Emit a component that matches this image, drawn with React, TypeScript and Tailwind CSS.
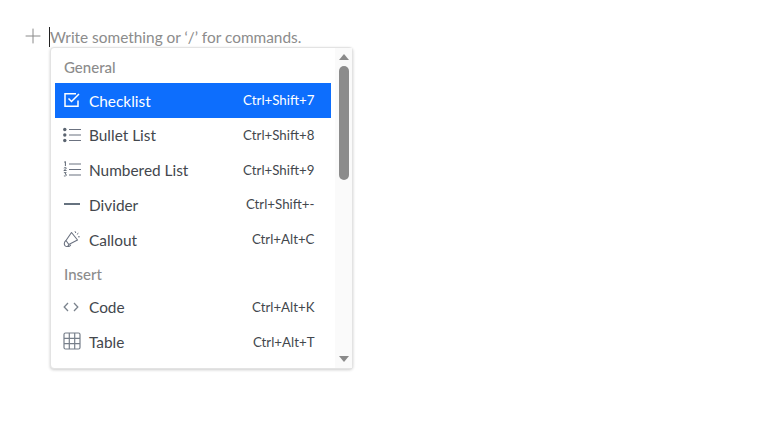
import React from "react";
import { Plus } from "lucide-react";

const CheckIcon = () => (
  <svg width="18" height="18" viewBox="0 0 18 18" fill="none" stroke="currentColor" strokeWidth="1.5">
    <path d="M15 9.5V15.2H2V2.8H13" />
    <path d="M5.5 7.5 8.5 10.5 16 3" />
  </svg>
);

const BulletIcon = () => (
  <svg width="18" height="16" viewBox="0 0 18 16" fill="none" stroke="currentColor" strokeWidth="1.2">
    <circle cx="1.8" cy="2.5" r="1.7" fill="#5b6470" stroke="none" />
    <circle cx="1.8" cy="8" r="1.7" fill="#5b6470" stroke="none" />
    <circle cx="1.8" cy="13.5" r="1.7" fill="#5b6470" stroke="none" />
    <path d="M6 2.5h12M6 8h12M6 13.5h12" />
  </svg>
);

const NumberedIcon = () => (
  <svg width="18" height="17" viewBox="0 0 18 17" fill="none" stroke="currentColor">
    <path d="M1.2 1.2 2.4.6V5" strokeWidth="0.9" stroke="#4b5563" />
    <path d="M.8 7.2q1.6-1.4 2.5-.3.4.7-2.5 2.6h2.8" strokeWidth="0.8" stroke="#4b5563" />
    <path d="M.9 11.6h2.3l-1.2 1.4q1.6 0 1.4 1.2-.5 1.4-2.5.7" strokeWidth="0.8" stroke="#4b5563" />
    <path d="M6 3h12M6 8.5h12M6 14h12" strokeWidth="1.1" />
  </svg>
);

const DividerIcon = () => (
  <svg width="18" height="16" viewBox="0 0 18 16" fill="none" stroke="#66727f" strokeWidth="2">
    <path d="M1 8h16" />
  </svg>
);

const CalloutIcon = () => (
  <svg width="18" height="18" viewBox="0 0 18 18" fill="none" stroke="currentColor" strokeWidth="1.1">
    <path d="M3 10.5 8.5 2.5 14.5 10 5.8 14.5Z" strokeLinejoin="round" />
    <path d="M3 10.5C1 12 .8 14.5 2.2 15.8 3.6 17 5.8 16.6 5.8 14.5" />
    <path d="M4.2 16.2c1.6.6 3 .1 3.6-1.6" />
    <path d="M12 1.2l.8 1.8M15.4 3.2l-1.5 1.2M16.8 6.8h-1.8" strokeWidth="1" />
  </svg>
);

const CodeIcon = () => (
  <svg width="16" height="12" viewBox="0 0 16 12" fill="none" stroke="#7b838d" strokeWidth="1.3">
    <path d="M5 2 1.2 6 5 10M11 2l3.8 4L11 10" />
  </svg>
);

const TableIcon = () => (
  <svg width="18" height="18" viewBox="0 0 18 18" fill="none" stroke="#777f8a" strokeWidth="1.2">
    <rect x="1" y="1" width="16" height="16" rx="1.5" />
    <path d="M1 6.3h16M1 11.7h16M6.3 1v16M11.7 1v16" />
  </svg>
);

const general = [
  { icon: <CheckIcon />, label: "Checklist", keys: "Ctrl+Shift+7", active: true },
  { icon: <BulletIcon />, label: "Bullet List", keys: "Ctrl+Shift+8" },
  { icon: <NumberedIcon />, label: "Numbered List", keys: "Ctrl+Shift+9" },
  { icon: <DividerIcon />, label: "Divider", keys: "Ctrl+Shift+-" },
  { icon: <CalloutIcon />, label: "Callout", keys: "Ctrl+Alt+C" },
];

const insert = [
  { icon: <CodeIcon />, label: "Code", keys: "Ctrl+Alt+K" },
  { icon: <TableIcon />, label: "Table", keys: "Ctrl+Alt+T" },
];

type ItemProps = { icon: React.ReactNode; label: string; keys: string; active?: boolean };

const Item = ({ icon, label, keys, active }: ItemProps) => (
  <div className={`flex h-[34.7px] items-center pl-[8px] pr-[16.5px] ${active ? "bg-[#0d6efd] text-white" : "text-[#43474d]"}`}>
    <span className={`flex w-[26px] justify-start ${active ? "text-white" : "text-[#6b7280]"}`}>{icon}</span>
    <span className="pt-[2px] text-[15.4px]">{label}</span>
    <span className="ml-auto pt-[2px] text-[13.3px]">{keys}</span>
  </div>
);

export default function App() {
  return (
    <div className="relative h-[431px] w-[780px] bg-white font-['Lato',sans-serif]">
      <div className="flex items-center pl-[21px] pt-[27px]">
        <Plus className="-my-[2px] -mt-[4px] h-6 w-6 text-[#8a8a8a]" strokeWidth={1} />
        <span className="ml-[4px] h-[20px] w-px bg-[#222]" />
        <span className="text-[15.4px] leading-[20px] text-[#8c8c8c]">Write something or ‘/’ for commands.</span>
      </div>

      <div className="absolute left-[49.5px] top-[47px] flex h-[322px] w-[303.5px] rounded-[4px] border border-[#e3e3e3] bg-white shadow-[0_1px_3px_rgba(0,0,0,0.2)]">
        <div className="w-[280.5px] pl-[4.5px]">
          <div className="flex h-[35px] items-center pl-[9px] pt-[4px] text-[15px] font-medium text-[#8c8c8c]">General</div>
          {general.map((item) => (
            <Item key={item.label} {...item} />
          ))}
          <div className="flex h-[33px] items-center pl-[9px] pt-[2px] text-[15px] font-medium text-[#8c8c8c]">Insert</div>
          {insert.map((item) => (
            <Item key={item.label} {...item} />
          ))}
        </div>
        <div className="ml-auto flex w-[17px] flex-col items-center bg-[#fafafa] pt-[6px]">
          <div className="h-0 w-0 border-x-[5px] border-b-[6px] border-x-transparent border-b-[#8a8a8a]" />
          <div className="mt-[6px] h-[114px] w-[10px] rounded-[5px] bg-[#8c8c8c]" />
          <div className="mb-[6px] mt-auto h-0 w-0 border-x-[5px] border-t-[6px] border-x-transparent border-t-[#8a8a8a]" />
        </div>
      </div>
    </div>
  );
}
